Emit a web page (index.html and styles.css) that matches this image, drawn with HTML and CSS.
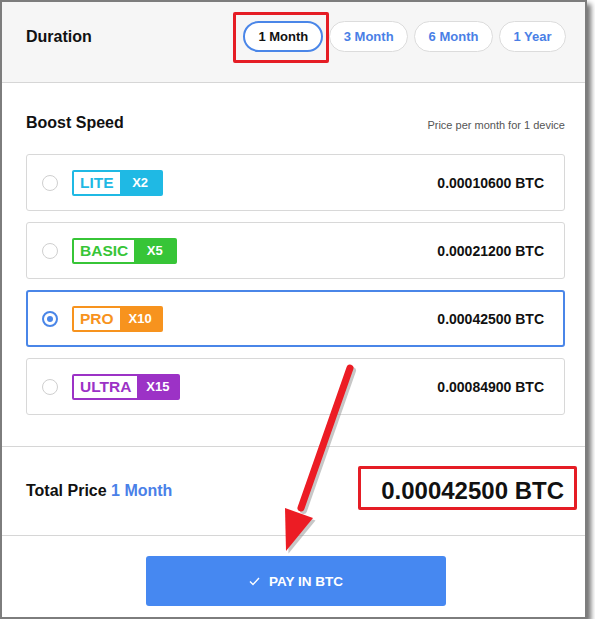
FILE: index.html
```html
<!DOCTYPE html>
<html lang="en">
<head>
<meta charset="utf-8">
<title>Boost Speed</title>
<link rel="stylesheet" href="styles.css">
</head>
<body>
<div class="frame">
  <header class="duration">
    <h2 class="title">Duration</h2>
    <div class="pills">
      <span class="pill active">1 Month</span>
      <span class="pill">3 Month</span>
      <span class="pill">6 Month</span>
      <span class="pill">1 Year</span>
    </div>
  </header>

  <section class="boost">
    <div class="boost-head">
      <h2 class="title">Boost Speed</h2>
      <span class="note">Price per month for 1 device</span>
    </div>
    <ul class="plans">
      <li class="plan">
        <span class="radio"></span>
        <span class="badge lite"><span class="name">LITE</span><span class="mult">X2</span></span>
        <span class="price">0.00010600 BTC</span>
      </li>
      <li class="plan">
        <span class="radio"></span>
        <span class="badge basic"><span class="name">BASIC</span><span class="mult">X5</span></span>
        <span class="price">0.00021200 BTC</span>
      </li>
      <li class="plan selected">
        <span class="radio"></span>
        <span class="badge pro"><span class="name">PRO</span><span class="mult">X10</span></span>
        <span class="price">0.00042500 BTC</span>
      </li>
      <li class="plan">
        <span class="radio"></span>
        <span class="badge ultra"><span class="name">ULTRA</span><span class="mult">X15</span></span>
        <span class="price">0.00084900 BTC</span>
      </li>
    </ul>
  </section>

  <section class="total">
    <div class="total-label">Total Price <span class="accent">1 Month</span></div>
    <div class="total-price">0.00042500 BTC</div>
  </section>

  <section class="pay">
    <button class="pay-btn"><svg class="check" width="11" height="9" viewBox="0 0 11 9"><polyline points="1,4.5 4,7.5 10,1" fill="none" stroke="#fff" stroke-width="1.4"/></svg>PAY IN BTC</button>
  </section>

  <div class="mark mark-pill"></div>
  <div class="mark mark-total"></div>
  <svg class="arrow" width="583" height="615" viewBox="0 0 583 615">
    <g transform="translate(2.5,2.5)" fill="#9a9a9a" stroke="#9a9a9a" opacity="0.55">
      <line x1="348" y1="366" x2="299" y2="506" stroke-width="7" stroke-linecap="round"/>
      <polygon points="284,549 283,506 311,516" stroke="none"/>
    </g>
    <g fill="#ec1c24" stroke="#ec1c24">
      <line x1="348" y1="366" x2="299" y2="506" stroke-width="7" stroke-linecap="round"/>
      <polygon points="284,549 283,506 311,516" stroke="none"/>
    </g>
  </svg>
</div>
</body>
</html>
```

FILE: styles.css
```css
* { box-sizing: border-box; }

html, body {
  margin: 0;
  padding: 0;
  background: #ffffff;
}

body {
  font-family: "Liberation Sans", Arial, sans-serif;
  color: #111;
}

.frame {
  position: relative;
  width: 587px;
  height: 619px;
  border: 2px solid #7d7d7d;
  box-shadow: 4px 4px 5px rgba(0, 0, 0, 0.55);
  background: #fff;
  display: flex;
  flex-direction: column;
}

.title {
  margin: 0;
  font-size: 16px;
  font-weight: bold;
  line-height: 20px;
  color: #111;
}

/* Header */
.duration {
  height: 81px;
  background: #f6f6f6;
  border-bottom: 1px solid #d6d6d6;
  display: flex;
  align-items: flex-start;
  justify-content: space-between;
  padding: 19px 19px 0 24px;
}

.duration .title {
  line-height: 31px;
}

.pills {
  display: flex;
  gap: 6px;
}

.pill {
  display: inline-flex;
  align-items: center;
  justify-content: center;
  height: 31px;
  padding: 0 13.5px;
  border: 1px solid #dcdcdc;
  border-radius: 16px;
  background: #fff;
  font-size: 13px;
  font-weight: bold;
  color: #4a7fe6;
}

.pill.active {
  border: 2px solid #4a86e8;
  padding: 0 13px;
  color: #111;
}

/* Boost */
.boost {
  padding: 30px 20px 31px 24px;
  border-bottom: 1px solid #d6d6d6;
}

.boost-head {
  display: flex;
  justify-content: space-between;
  align-items: flex-start;
  height: 20px;
  margin-bottom: 21px;
}

.note {
  font-size: 11px;
  color: #555;
  margin-top: 6px;
}

.plans {
  list-style: none;
  margin: 0;
  padding: 0;
  display: flex;
  flex-direction: column;
  gap: 11px;
}

.plan {
  height: 57px;
  border: 1px solid #d8d8d8;
  border-radius: 3px;
  display: flex;
  align-items: center;
  padding: 0 20px 0 15px;
}

.plan.selected {
  border: 2px solid #4a86e8;
  padding: 0 19px 0 14px;
}

.radio {
  width: 16px;
  height: 16px;
  border: 1px solid #cfcfcf;
  border-radius: 50%;
  margin-right: 14px;
  flex: none;
  display: flex;
  align-items: center;
  justify-content: center;
}

.plan.selected .radio {
  border: 2px solid #4a86e8;
}

.plan.selected .radio::after {
  content: "";
  width: 6px;
  height: 6px;
  border-radius: 50%;
  background: #4a86e8;
}

.badge {
  display: inline-flex;
  height: 26px;
  border: 2px solid var(--c);
  border-radius: 2px;
  background: var(--c);
  font-weight: bold;
}

.badge .name {
  background: #fff;
  color: var(--c);
  font-size: 15.5px;
  line-height: 22px;
  padding: 0 6px;
}

.badge .mult {
  color: #fff;
  font-size: 13px;
  line-height: 22px;
  width: 41px;
  text-align: center;
}

.badge.lite  { --c: #1fb9e4; }
.badge.basic { --c: #37c537; }
.badge.pro   { --c: #f7931e; }
.badge.ultra { --c: #9c32c6; }

.price {
  margin-left: auto;
  font-size: 14px;
  font-weight: bold;
  color: #111;
}

/* Total */
.total {
  height: 89px;
  border-bottom: 1px solid #d6d6d6;
  display: flex;
  align-items: center;
  justify-content: space-between;
  padding: 0 21px 0 24px;
}

.total-label {
  font-size: 16px;
  font-weight: bold;
  color: #111;
}

.accent {
  color: #4a80e8;
}

.total-price {
  font-size: 24px;
  font-weight: bold;
  color: #111;
}

/* Pay */
.pay {
  flex: 1;
  padding: 20px 0 0 144px;
}

.pay-btn {
  width: 300px;
  height: 50px;
  border: none;
  border-radius: 3px;
  background: #4688f1;
  color: #fff;
  font-family: "Liberation Sans", Arial, sans-serif;
  font-size: 13.5px;
  font-weight: bold;
  display: flex;
  align-items: center;
  justify-content: center;
  gap: 9px;
}

/* Annotations */
.mark {
  position: absolute;
  border: 3px solid #e51d25;
  border-radius: 2px;
  pointer-events: none;
}

.mark-pill {
  left: 231px;
  top: 10px;
  width: 96px;
  height: 51px;
}

.mark-total {
  left: 356px;
  top: 464px;
  width: 219px;
  height: 44px;
}

.arrow {
  position: absolute;
  left: 0;
  top: 0;
  pointer-events: none;
}
```
